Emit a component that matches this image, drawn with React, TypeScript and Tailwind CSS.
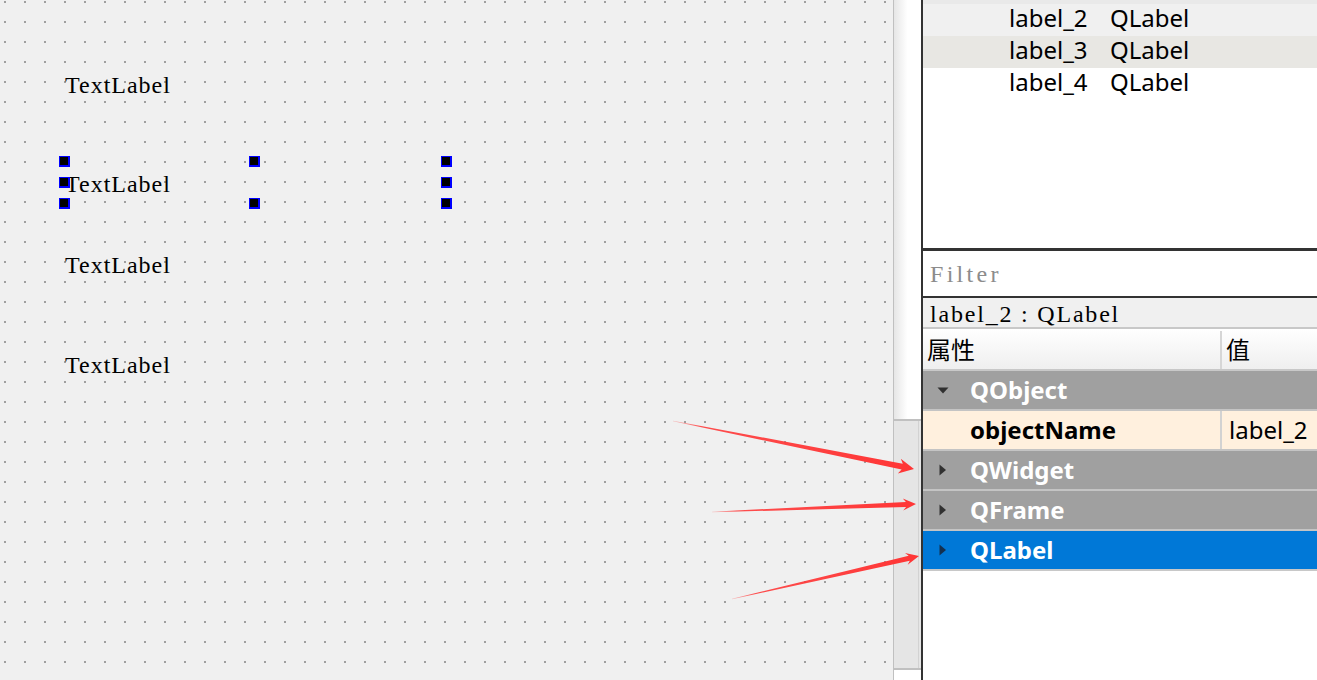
import React from "react";

const serif = "font-['Liberation_Serif','Times_New_Roman',serif]";
const sans = "font-['Noto_Sans','Noto_Sans_CJK_SC',sans-serif]";

type Pt = [number, number];

// tapered arrow: thin tail, thicker shaft near the head, swept head
const arrowPoints = (tail: Pt, tip: Pt, shaftW: number, headW: number, headL: number) => {
  const dx = tip[0] - tail[0];
  const dy = tip[1] - tail[1];
  const len = Math.hypot(dx, dy);
  const ux = dx / len;
  const uy = dy / len;
  const nx = -uy;
  const ny = ux;
  const bx = tip[0] - ux * headL;
  const by = tip[1] - uy * headL;
  const nb = 3; // notch depth
  const pts: Pt[] = [
    [tail[0] + nx * 0.3, tail[1] + ny * 0.3],
    [bx + ux * nb + nx * (shaftW / 2), by + uy * nb + ny * (shaftW / 2)],
    [bx + nx * (headW / 2), by + ny * (headW / 2)],
    tip,
    [bx - nx * (headW / 2), by - ny * (headW / 2)],
    [bx + ux * nb - nx * (shaftW / 2), by + uy * nb - ny * (shaftW / 2)],
    [tail[0] - nx * 0.3, tail[1] - ny * 0.3],
  ];
  return pts.map((p) => `${p[0].toFixed(1)},${p[1].toFixed(1)}`).join(" ");
};

const arrows: { tail: Pt; tip: Pt; sw: number; hw: number; hl: number }[] = [
  { tail: [673, 421], tip: [914, 469], sw: 6, hw: 15, hl: 15 },
  { tail: [712, 512], tip: [916, 504], sw: 5, hw: 12, hl: 13 },
  { tail: [732, 599], tip: [919, 556], sw: 5, hw: 12, hl: 13 },
];

const Handle = ({ x, y }: { x: number; y: number }) => (
  <div
    className="absolute h-[11px] w-[11px] border-t border-l border-r-2 border-b-2 border-[#0000ff] bg-black"
    style={{ left: x, top: y }}
  />
);

const TextLabel = ({ top }: { top: number }) => (
  <div
    className={`absolute left-[65px] text-[24px] leading-[28px] tracking-[1px] text-black ${serif}`}
    style={{ top }}
  >
    TextLabel
  </div>
);

const Canvas = () => (
  <div className="relative h-full w-[893px] overflow-hidden bg-[#f0f0f0]">
    <svg className="absolute inset-0" width="893" height="680">
      <defs>
        <pattern id="grid" width="20" height="20" patternUnits="userSpaceOnUse">
          <rect x="4" y="1" width="2" height="2" fill="#9f9f9f" />
        </pattern>
      </defs>
      <rect width="893" height="680" fill="url(#grid)" />
    </svg>
    <TextLabel top={71} />
    <TextLabel top={170} />
    <TextLabel top={251} />
    <TextLabel top={351} />
    {[156, 177, 198].map((y) => (
      <Handle key={`l${y}`} x={59} y={y} />
    ))}
    <Handle x={249} y={156} />
    <Handle x={249} y={198} />
    {[156, 177, 198].map((y) => (
      <Handle key={`r${y}`} x={441} y={y} />
    ))}
  </div>
);

const Strip = () => (
  <div className="flex h-full w-[28px] flex-col border-l border-[#c0c0c0]">
    <div className="h-[419px] bg-linear-to-r from-[#e6e6e6] via-white to-white" />
    <div className="flex h-[251px] border-y-2 border-[#c0c0c0] bg-[#e5e5e5]">
      <div className="flex-1 border-r border-[#d2d2d2]" />
      <div className="w-[2px]" />
    </div>
    <div className="flex-1 bg-white" />
  </div>
);

const Tri = ({ open, dark }: { open?: boolean; dark: string }) =>
  open ? (
    <svg width="12" height="7" viewBox="0 0 12 7" className="ml-[14px] shrink-0">
      <path d="M0.5 0.5 L11.5 0.5 L6 6.5 Z" fill={dark} />
    </svg>
  ) : (
    <svg width="8" height="12" viewBox="0 0 8 12" className="ml-[16px] shrink-0">
      <path d="M0.5 0.5 L7 6 L0.5 11.5 Z" fill={dark} />
    </svg>
  );

const GroupRow = ({ name, open, selected }: { name: string; open?: boolean; selected?: boolean }) => (
  <div
    className={`flex h-[40px] items-center border-b-2 ${
      selected ? "border-[#c8c8c8] bg-[#0078d7]" : "border-[#c4c4c4] bg-[#a0a0a0]"
    }`}
  >
    <div className="flex w-[47px] items-center">
      <Tri open={open} dark={selected ? "#14304f" : "#303030"} />
    </div>
    <span className="text-[24px] leading-[38px] font-bold text-white">{name}</span>
  </div>
);

const Panel = () => (
  <div className={`flex h-full w-[396px] flex-col border-l-2 border-[#333] bg-white ${sans}`}>
    {/* object inspector list */}
    <div className="h-[248px] shrink-0 bg-white text-[24px] text-black">
      <div className="h-[4px] bg-[#e9e9e9]" />
      {[
        ["label_2", "bg-[#f0f0f0]"],
        ["label_3", "bg-[#e8e7e3]"],
        ["label_4", "bg-white"],
      ].map(([n, bg]) => (
        <div key={n} className={`flex h-[32px] pl-[86px] leading-[28px] ${bg}`}>
          <span className="w-[101px]">{n}</span>
          <span>QLabel</span>
        </div>
      ))}
    </div>

    {/* filter */}
    <div
      className={`h-[50px] shrink-0 border-t-[3px] border-b-2 border-[#333] bg-white pt-[2px] pl-[7px] text-[24px] leading-[43px] tracking-[3.3px] text-[#8c8c8c] ${serif}`}
    >
      Filter
    </div>
    <div
      className={`h-[31px] shrink-0 border-b-2 border-[#c8c8c8] bg-[#f0f0f0] pt-[3px] pl-[7px] text-[24px] leading-[26px] tracking-[1.8px] text-black ${serif}`}
    >
      label_2 : QLabel
    </div>

    {/* property header */}
    <div className="flex h-[42px] shrink-0 border-b-2 border-[#c8c8c8] bg-linear-to-b from-white to-[#efefef] pt-[2px] text-[24px] leading-[38px] text-black">
      <div className="w-[299px] border-r-2 border-[#d6d6d6] pl-[4px]">属性</div>
      <div className="flex-1 pl-[4px]">值</div>
    </div>

    <GroupRow name="QObject" open />
    <div className="flex h-[40px] border-b-2 border-[#c4c4c4] bg-[#fff0de] text-[24px] leading-[38px] text-black">
      <div className="w-[299px] border-r-2 border-[#d2d2d2] pl-[47px] font-bold">objectName</div>
      <div className="flex-1 pl-[7px]">label_2</div>
    </div>
    <GroupRow name="QWidget" />
    <GroupRow name="QFrame" />
    <GroupRow name="QLabel" selected />
    <div className="flex-1 bg-white" />
  </div>
);

export default function App() {
  return (
    <div className="relative flex h-[680px] w-[1317px] overflow-hidden bg-white">
      <Canvas />
      <Strip />
      <Panel />
      <svg className="pointer-events-none absolute inset-0" width="1317" height="680">
        <defs>
          {arrows.map((a, i) => (
            <linearGradient
              key={i}
              id={`ar${i}`}
              gradientUnits="userSpaceOnUse"
              x1={a.tail[0]}
              y1={a.tail[1]}
              x2={a.tip[0]}
              y2={a.tip[1]}
            >
              <stop offset="0" stopColor="#ff3b3b" stopOpacity="0.25" />
              <stop offset="0.12" stopColor="#ff3b3b" stopOpacity="0.9" />
              <stop offset="1" stopColor="#ff3535" />
            </linearGradient>
          ))}
        </defs>
        {arrows.map((a, i) => (
          <polygon key={i} points={arrowPoints(a.tail, a.tip, a.sw, a.hw, a.hl)} fill={`url(#ar${i})`} />
        ))}
      </svg>
    </div>
  );
}
